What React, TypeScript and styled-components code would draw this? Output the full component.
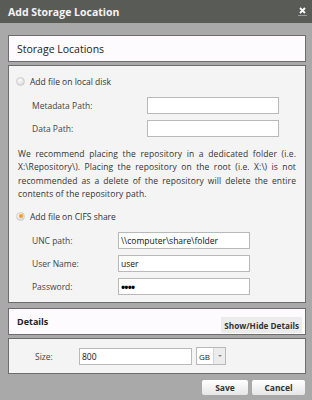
import React from "react";
import styled, { createGlobalStyle } from "styled-components";

const Global = createGlobalStyle`
  html, body { margin: 0; padding: 0; }
  body { background: #a9a9a9; font-family: "Open Sans", "DejaVu Sans", sans-serif; }
  * { box-sizing: border-box; }
`;

const Dialog = styled.div`
  width: 312px;
  height: 400px;
  background: #a9a9a9;
  display: flex;
  flex-direction: column;
`;

const TitleBar = styled.div`
  height: 23px;
  background: #595b57;
  display: flex;
  align-items: center;
  justify-content: space-between;
  padding: 0 5px 0 8px;
`;

const Title = styled.div`
  color: #f4f4f4;
  font-size: 10.5px;
  font-weight: 700;
`;

const Close = styled.div`
  width: 9px;
  height: 10px;
  display: flex;
  flex-direction: column;
  align-items: center;
  justify-content: center;
  border-bottom: 1px solid #9a9a9a;
  margin-top: -2px;
`;

const Body = styled.div`
  padding: 12px 6px 0 8px;
  display: flex;
  flex-direction: column;
`;

const Header = styled.div<{ $gap?: number }>`
  height: 27px;
  margin-top: ${(p) => p.$gap ?? 0}px;
  background: #fdfbfd;
  border: 1px solid #6d6d6d;
  display: flex;
  align-items: center;
  justify-content: space-between;
  padding: 0 3px 0 8px;
`;

const HeaderTitle = styled.div<{ $bold?: boolean }>`
  font-size: ${(p) => (p.$bold ? 9 : 10.5)}px;
  font-weight: ${(p) => (p.$bold ? 700 : 400)};
  color: #222;
`;

const Panel = styled.div<{ $gap?: number }>`
  margin-top: ${(p) => p.$gap ?? 3}px;
  background: #f4f4f4;
  border: 1px solid #6d6d6d;
`;

const MainPanel = styled(Panel)`
  padding: 9px 9px 7px 7px;
  height: 238px;
`;

const RadioRow = styled.label<{ $gap?: number }>`
  display: flex;
  align-items: center;
  gap: 5px;
  height: 12px;
  margin-top: ${(p) => p.$gap ?? 0}px;
  font-size: 8.5px;
  color: #333;
`;

const Radio = styled.span<{ $on?: boolean }>`
  width: 9px;
  height: 9px;
  border-radius: 50%;
  background: radial-gradient(circle at 40% 35%, #fdfdfd 0%, #e0e0e0 60%, #c8c8c8 100%);
  border: 1px solid #cfcfcf;
  display: flex;
  align-items: center;
  justify-content: center;
  &::after {
    content: "";
    width: 4px;
    height: 4px;
    border-radius: 50%;
    background: ${(p) => (p.$on ? "#f2a20d" : "transparent")};
  }
`;

const Form = styled.div<{ $labelW: number }>`
  display: grid;
  grid-template-columns: ${(p) => p.$labelW}px 132px;
  row-gap: 6px;
  align-items: center;
  margin: 10px 0 0 16px;
`;

const Label = styled.div`
  font-size: 8.5px;
  color: #444;
`;

const Input = styled.div<{ $w?: number }>`
  height: 17px;
  width: ${(p) => (p.$w ? `${p.$w}px` : "auto")};
  background: #fff;
  border: 1px solid #b9b9b9;
  font-size: 8.5px;
  color: #111;
  display: flex;
  align-items: center;
  padding-left: 2px;
  white-space: nowrap;
  overflow: hidden;
`;

const Dots = styled.span`
  font-size: 11px;
  font-weight: 700;
  letter-spacing: -0.8px;
  color: #000;
`;

const Note = styled.p`
  margin: 10px 0 0 2px;
  font-size: 8.5px;
  line-height: 13.3px;
  color: #333;
  text-align: justify;
  letter-spacing: 0.1px;
`;

const SmallButton = styled.div`
  align-self: flex-end;
  margin-bottom: 1px;
  height: 16px;
  padding: 0 3px;
  background: #ececec;
  font-size: 8.2px;
  font-weight: 700;
  color: #333;
  display: flex;
  align-items: center;
`;

const SizePanel = styled(Panel)`
  height: 36px;
  display: flex;
  align-items: center;
  padding-left: 26px;
`;

const SizeLabel = styled(Label)`
  width: 44px;
`;

const Select = styled.div`
  margin-left: 4px;
  width: 30px;
  height: 18px;
  display: flex;
  border: 1px solid #b9b9b9;
  background: #fff;
`;

const SelectValue = styled.div`
  flex: 1;
  font-size: 8px;
  color: #222;
  display: flex;
  align-items: center;
  padding-left: 2px;
`;

const SelectArrow = styled.div`
  width: 12px;
  background: #ececec;
  border-left: 1px solid #d4d4d4;
  display: flex;
  align-items: center;
  justify-content: center;
  &::after {
    content: "";
    border-left: 2px solid transparent;
    border-right: 2px solid transparent;
    border-top: 2px solid #888;
  }
`;

const Footer = styled.div`
  display: flex;
  justify-content: flex-end;
  gap: 4px;
  margin-top: 6px;
  padding-right: 1px;
`;

const Button = styled.div<{ $w: number }>`
  width: ${(p) => p.$w}px;
  height: 15px;
  background: linear-gradient(#ffffff, #e6e6e6);
  border-radius: 2px;
  font-size: 8.5px;
  font-weight: 700;
  color: #333;
  display: flex;
  align-items: center;
  justify-content: center;
`;

export default function App() {
  return (
    <>
      <Global />
      <Dialog>
        <TitleBar>
          <Title>Add Storage Location</Title>
          <Close>
            <svg width="7" height="7" viewBox="0 0 7 7">
              <path d="M1 1L6 6M6 1L1 6" stroke="#fff" strokeWidth="1.8" />
            </svg>
          </Close>
        </TitleBar>
        <Body>
          <Header>
            <HeaderTitle>Storage Locations</HeaderTitle>
          </Header>
          <MainPanel>
            <RadioRow>
              <Radio />
              Add file on local disk
            </RadioRow>
            <Form $labelW={115}>
              <Label>Metadata Path:</Label>
              <Input />
              <Label>Data Path:</Label>
              <Input />
            </Form>
            <Note>
              We recommend placing the repository in a dedicated folder (i.e.
              X:\Repository\). Placing the repository on the root (i.e. X:\) is not
              recommended as a delete of the repository will delete the entire
              contents of the repository path.
            </Note>
            <RadioRow $gap={10}>
              <Radio $on />
              Add file on CIFS share
            </RadioRow>
            <Form $labelW={86}>
              <Label>UNC path:</Label>
              <Input>\\computer\share\folder</Input>
              <Label>User Name:</Label>
              <Input>user</Input>
              <Label>Password:</Label>
              <Input>
                <Dots>••••</Dots>
              </Input>
            </Form>
          </MainPanel>
          <Header $gap={5}>
            <HeaderTitle $bold>Details</HeaderTitle>
            <SmallButton>Show/Hide Details</SmallButton>
          </Header>
          <SizePanel>
            <SizeLabel>Size:</SizeLabel>
            <Input $w={113}>800</Input>
            <Select>
              <SelectValue>GB</SelectValue>
              <SelectArrow />
            </Select>
          </SizePanel>
          <Footer>
            <Button $w={46}>Save</Button>
            <Button $w={53}>Cancel</Button>
          </Footer>
        </Body>
      </Dialog>
    </>
  );
}
